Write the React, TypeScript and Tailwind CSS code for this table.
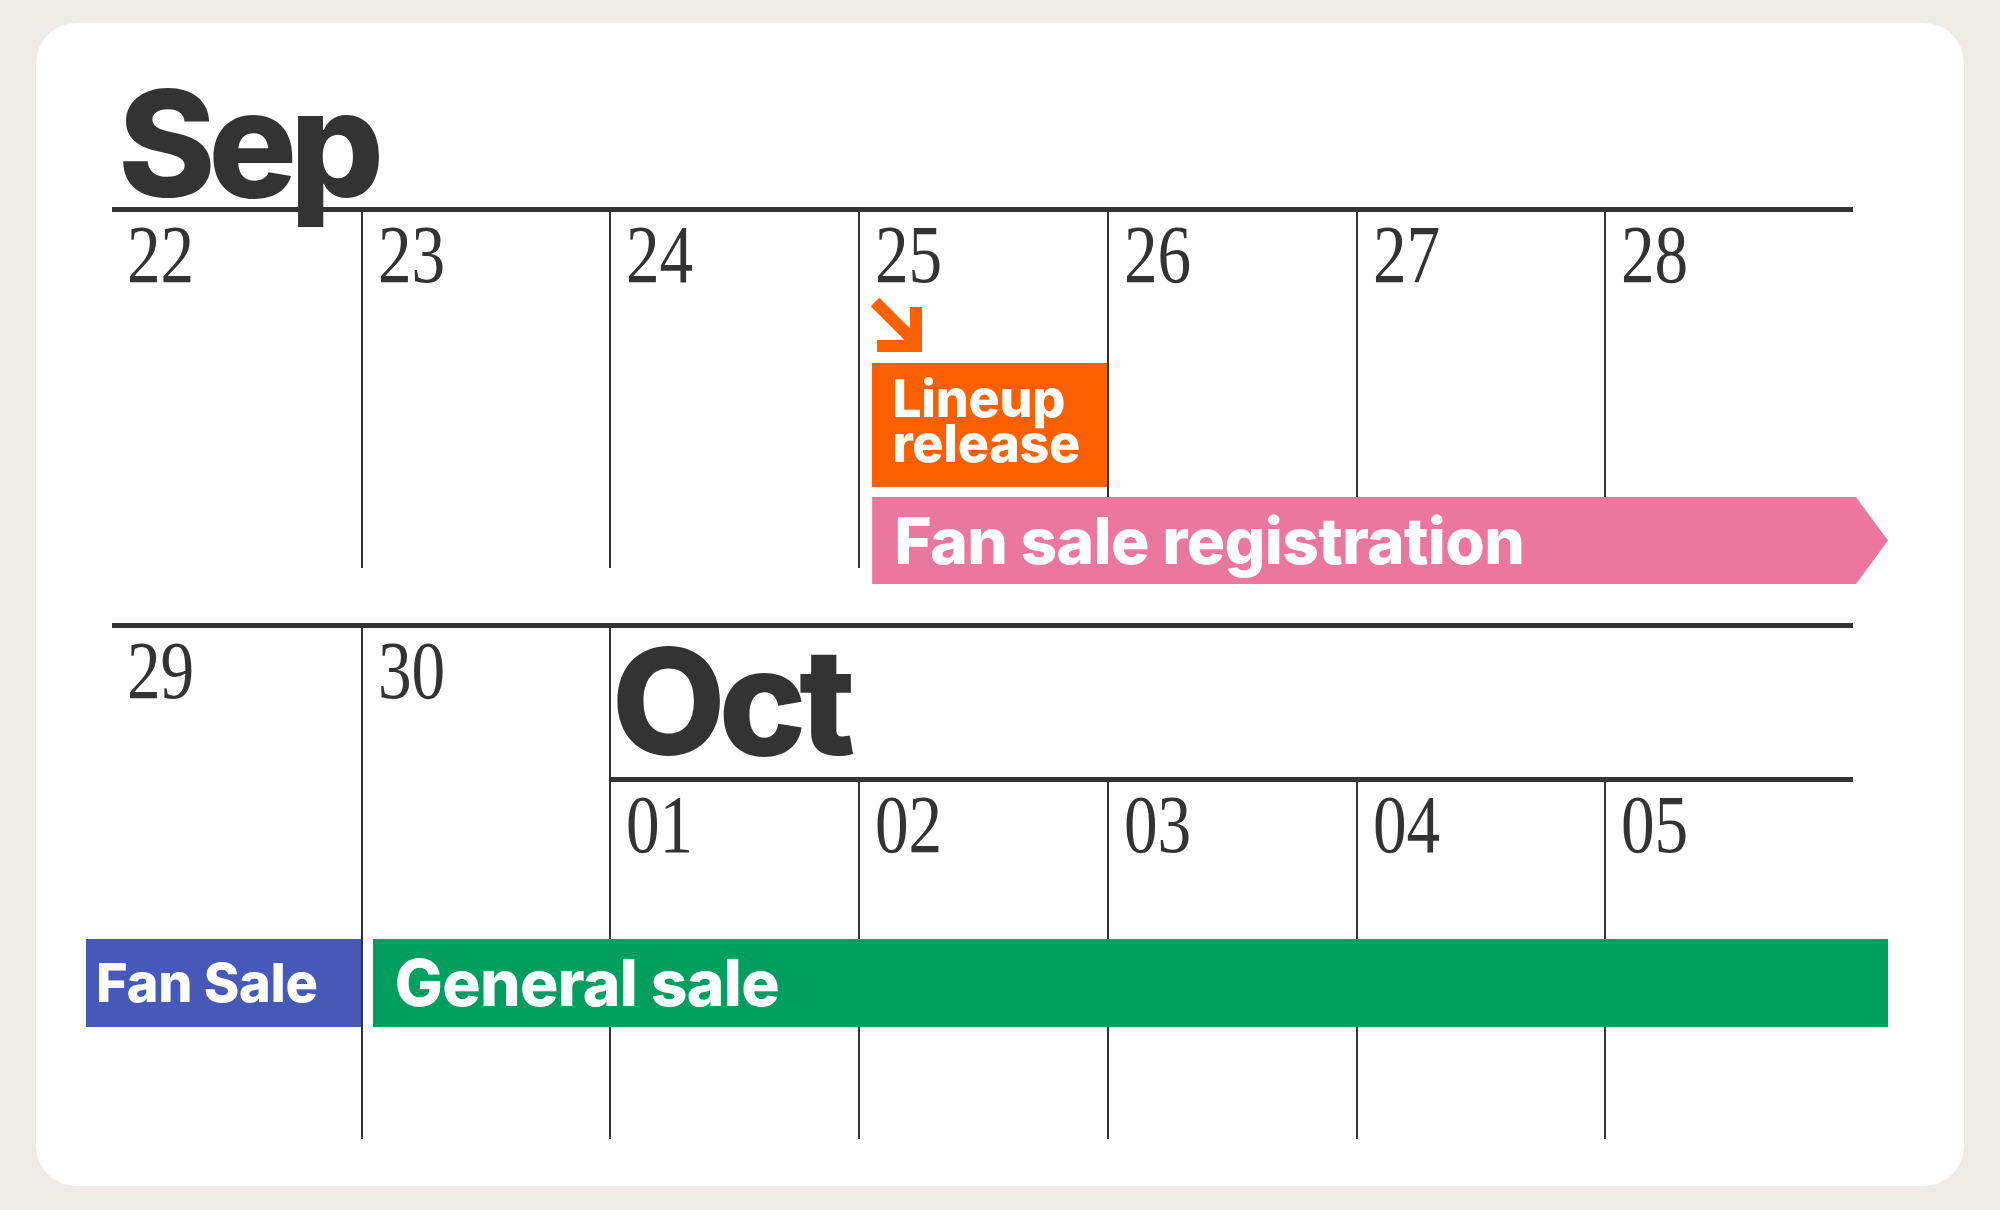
const sans = "font-['Inter','Liberation_Sans',sans-serif] font-extrabold"

function DayNum({ n }: { n: string }) {
  return (
    <div className="pl-[15px] pt-[2px]">
      <span className="inline-block origin-left scale-x-[0.82] font-['Liberation_Serif','Times_New_Roman',serif] text-[82px] leading-none text-[#333]">
        {n}
      </span>
    </div>
  )
}

function DownRightArrow() {
  return (
    <svg width="60" height="60" viewBox="0 0 60 60" className="block">
      <path d="M9 6 L47 44" stroke="#FA5F00" strokeWidth="12" fill="none" />
      <path d="M50 11 V50 H11" stroke="#FA5F00" strokeWidth="12" fill="none" strokeLinejoin="miter" />
    </svg>
  )
}

const sepDays = [
  { n: '22', cls: 'col-start-1' },
  { n: '23', cls: 'col-start-2 border-l-2' },
  { n: '24', cls: 'col-start-3 border-l-2' },
  { n: '25', cls: 'col-start-4 border-l-2' },
  { n: '26', cls: 'col-start-5 border-l-2' },
  { n: '27', cls: 'col-start-6 border-l-2' },
  { n: '28', cls: 'col-start-7 border-l-2' },
]

const octDays = [
  { n: '01', cls: 'col-start-3' },
  { n: '02', cls: 'col-start-4 border-l-2' },
  { n: '03', cls: 'col-start-5 border-l-2' },
  { n: '04', cls: 'col-start-6 border-l-2' },
  { n: '05', cls: 'col-start-7 border-l-2' },
]

export default function App() {
  return (
    <div className="h-[1210px] w-[2000px] bg-[#EEEAE5] px-[36px] pt-[23px]">
      <div className="h-[1163px] rounded-[40px] bg-white pl-[76px] pt-[47px]">
        {/* Sep header */}
        <div className="h-[137px]">
          <div className={`${sans} pl-[6px] text-[148px] leading-none tracking-[-0.05em] text-[#333]`}>Sep</div>
        </div>

        {/* week 1 */}
        <div className="grid w-[1741px] grid-cols-7 grid-rows-[151px_124px_10px_87px] border-t-[5px] border-[#333]">
          {sepDays.map((d) => (
            <div key={d.n} className={`${d.cls} row-start-1 row-span-4 mb-[16px] border-[#333]`}>
              <DayNum n={d.n} />
            </div>
          ))}

          <div className="col-start-4 row-start-1 mb-[7px] ml-[8px] self-end justify-self-start">
            <DownRightArrow />
          </div>

          <div className="col-start-4 row-start-2 ml-[14px] bg-[#FA5F00] pl-[20px] pt-[13px]">
            <div className={`${sans} text-[52px] leading-[45px] tracking-[-0.005em] text-white`}>
              Lineup
              <br />
              release
            </div>
          </div>

          <div className="col-start-4 col-end-8 row-start-4 -mr-[35px] ml-[14px] flex items-center bg-[#EC779E] pl-[22px] [clip-path:polygon(0_0,calc(100%-32px)_0,100%_50%,calc(100%-32px)_100%,0_100%)]">
            <span className={`${sans} text-[64px] leading-none tracking-[-0.01em] text-white`}>Fan sale registration</span>
          </div>
        </div>

        {/* week 2 */}
        <div className="mt-[39px] grid w-[1741px] grid-cols-7 grid-rows-[149px_5px_157px_88px_112px] border-t-[5px] border-[#333]">
          <div className="col-start-1 row-start-1 row-span-5">
            <DayNum n="29" />
          </div>
          <div className="col-start-2 row-start-1 row-span-5 border-l-2 border-[#333]">
            <DayNum n="30" />
          </div>
          <div className="col-start-3 row-start-1 row-span-5 border-l-2 border-[#333]" />

          <div className="col-start-3 col-end-8 row-start-1 pl-[2px]">
            <div className={`${sans} text-[148px] leading-none tracking-[-0.05em] text-[#333]`}>Oct</div>
          </div>
          <div className="col-start-3 col-end-8 row-start-2 bg-[#333]" />

          {octDays.map((d) => (
            <div key={d.n} className={`${d.cls} row-start-3 row-span-3 border-[#333] ${d.n === '01' ? 'pl-[2px]' : ''}`}>
              <DayNum n={d.n} />
            </div>
          ))}

          <div className="col-start-1 row-start-4 -ml-[26px] flex items-center bg-[#4659B9] pl-[10px]">
            <span className={`${sans} text-[54px] leading-none tracking-[-0.005em] text-white`}>Fan Sale</span>
          </div>
          <div className="col-start-2 col-end-8 row-start-4 -mr-[35px] ml-[12px] flex items-center bg-[#009E5F] pl-[22px]">
            <span className={`${sans} text-[64px] leading-none tracking-[-0.01em] text-white`}>General sale</span>
          </div>
        </div>
      </div>
    </div>
  )
}
